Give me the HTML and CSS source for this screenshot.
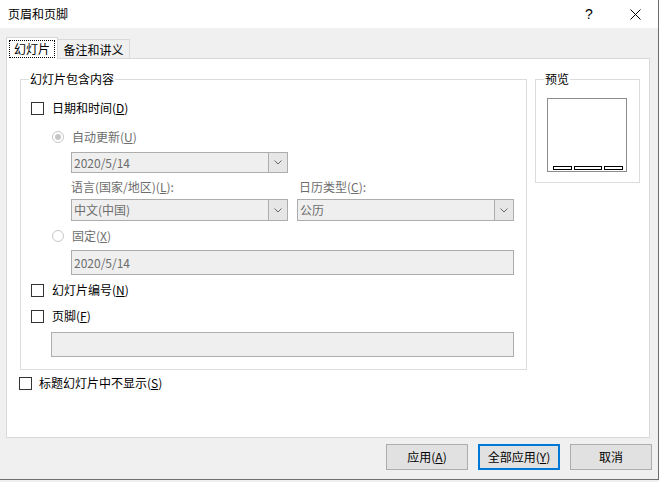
FILE: index.html
```html
<!DOCTYPE html>
<html lang="zh-CN">
<head>
<meta charset="utf-8">
<title>页眉和页脚</title>
<link rel="stylesheet" href="styles.css">
</head>
<body>
<div class="window">
  <div class="titlebar">
    <span class="title">页眉和页脚</span>
    <span class="tb-btn help">?</span>
    <span class="tb-btn close">
      <svg width="11" height="11" viewBox="0 0 11 11"><path d="M0.5 0.5 L10.5 10.5 M10.5 0.5 L0.5 10.5" stroke="#000" stroke-width="1" fill="none"/></svg>
    </span>
  </div>
  <div class="content">
    <div class="tabs">
      <div class="tab active"><span class="focus">幻灯片</span></div>
      <div class="tab">备注和讲义</div>
    </div>
    <div class="panel">
      <div class="panel-top">
        <div class="group main-group">
          <span class="legend">幻灯片包含内容</span>
          <div class="row check-row r-date">
            <span class="checkbox"></span><span class="label">日期和时间(<u>D</u>)</span>
          </div>
          <div class="row radio-row r-auto">
            <span class="radio checked"></span><span class="label disabled">自动更新(<u>U</u>)</span>
          </div>
          <div class="combo combo-date">
            <span class="combo-text">2020/5/14</span>
            <span class="combo-btn"><svg width="8" height="5" viewBox="0 0 8 5"><path d="M0.5 0.5 L4 4 L7.5 0.5" stroke="#666" stroke-width="1" fill="none"/></svg></span>
          </div>
          <div class="two-col labels">
            <span class="label disabled col">语言(国家/地区)(<u>L</u>):</span>
            <span class="label disabled col col-right">日历类型(<u>C</u>):</span>
          </div>
          <div class="two-col combos">
            <div class="combo col">
              <span class="combo-text">中文(中国)</span>
              <span class="combo-btn"><svg width="8" height="5" viewBox="0 0 8 5"><path d="M0.5 0.5 L4 4 L7.5 0.5" stroke="#666" stroke-width="1" fill="none"/></svg></span>
            </div>
            <div class="combo col">
              <span class="combo-text">公历</span>
              <span class="combo-btn"><svg width="8" height="5" viewBox="0 0 8 5"><path d="M0.5 0.5 L4 4 L7.5 0.5" stroke="#666" stroke-width="1" fill="none"/></svg></span>
            </div>
          </div>
          <div class="row radio-row r-fixed">
            <span class="radio"></span><span class="label disabled">固定(<u>X</u>)</span>
          </div>
          <div class="textbox tb-fixed"><span class="combo-text">2020/5/14</span></div>
          <div class="row check-row r-num">
            <span class="checkbox"></span><span class="label">幻灯片编号(<u>N</u>)</span>
          </div>
          <div class="row check-row r-footer">
            <span class="checkbox"></span><span class="label">页脚(<u>F</u>)</span>
          </div>
          <div class="textbox tb-footer"></div>
        </div>
        <div class="group preview-group">
          <span class="legend">预览</span>
          <div class="slide">
            <span class="bar bar-side"></span>
            <span class="bar bar-mid"></span>
            <span class="bar bar-side"></span>
          </div>
        </div>
      </div>
      <div class="row check-row r-title">
        <span class="checkbox"></span><span class="label">标题幻灯片中不显示(<u>S</u>)</span>
      </div>
    </div>
    <div class="buttons">
      <button class="btn">应用(<u>A</u>)</button>
      <button class="btn default">全部应用(<u>Y</u>)</button>
      <button class="btn">取消</button>
    </div>
  </div>
</div>
</body>
</html>
```

FILE: styles.css
```css
* {
  box-sizing: border-box;
}

html, body {
  margin: 0;
  padding: 0;
  background: #f0f0f0;
}

body {
  font-family: "Noto Sans CJK SC", "Microsoft YaHei", sans-serif;
  font-size: 12px;
  color: #000;
}

u {
  text-decoration: underline;
  text-underline-offset: 1px;
}

.window {
  width: 659px;
  height: 480px;
  background: #f0f0f0;
  border-right: 1px solid #6e6e6e;
  border-bottom: 1px solid #6e6e6e;
  display: flex;
  flex-direction: column;
}

.titlebar {
  height: 28px;
  background: #fff;
  display: flex;
  align-items: center;
  flex-shrink: 0;
}

.title {
  padding-left: 8px;
  line-height: 16px;
}

.tb-btn {
  width: 46px;
  height: 28px;
  display: flex;
  align-items: center;
  justify-content: center;
}

.help {
  margin-left: auto;
  font-family: "Liberation Sans", sans-serif;
  font-size: 14px;
}

.content {
  flex: 1;
  display: flex;
  flex-direction: column;
}

.tabs {
  display: flex;
  align-items: flex-end;
  margin-top: 9px;
  padding-left: 6px;
  height: 21px;
}

.tab {
  height: 19px;
  width: 72px;
  border: 1px solid #d9d9d9;
  border-left: none;
  border-bottom: none;
  background: #f0f0f0;
  display: flex;
  align-items: center;
  justify-content: center;
  line-height: 16px;
  padding-top: 1px;
}

.tab.active {
  height: 22px;
  width: 52px;
  border-left: 1px solid #d9d9d9;
  background: #fff;
  position: relative;
  z-index: 1;
  margin-bottom: -1px;
  padding-top: 0;
}

.focus {
  display: flex;
  align-items: center;
  justify-content: center;
  width: 46px;
  height: 18px;
  border: 1px dotted #000;
}

.panel {
  margin-left: 6px;
  width: 644px;
  height: 380px;
  background: #fff;
  border: 1px solid #d9d9d9;
}

.panel-top {
  display: flex;
  align-items: flex-start;
  padding-left: 13px;
  padding-top: 20px;
}

.group {
  position: relative;
  border: 1px solid #dcdcdc;
}

.legend {
  position: absolute;
  top: -8px;
  left: 8px;
  background: #fff;
  padding: 0 1px;
  line-height: 14px;
}

.main-group {
  width: 507px;
  height: 291px;
  padding-left: 10px;
  padding-top: 18px;
  display: flex;
  flex-direction: column;
  align-items: flex-start;
}

.preview-group {
  width: 105px;
  height: 104px;
  margin-left: 8px;
  padding-left: 11px;
  padding-top: 18px;
}

.slide {
  width: 80px;
  height: 74px;
  border: 1px solid #8c8c8c;
  display: flex;
  align-items: flex-end;
  gap: 2px;
  padding: 0 3px 1px 5px;
}

.bar {
  height: 4px;
  border: 1px solid #000;
  background: #fff;
}

.bar-side {
  width: 19px;
}

.bar-mid {
  width: 28px;
}

.row {
  display: flex;
  align-items: center;
  height: 20px;
}

.checkbox {
  width: 13px;
  height: 13px;
  border: 1px solid #333;
  background: #fff;
  flex-shrink: 0;
}

.check-row .label {
  margin-left: 8px;
}

.radio {
  width: 12px;
  height: 12px;
  border-radius: 50%;
  border: 1px solid #c6c6c6;
  background: #fff;
  display: flex;
  align-items: center;
  justify-content: center;
  flex-shrink: 0;
}

.radio.checked::after {
  content: "";
  width: 6px;
  height: 6px;
  border-radius: 50%;
  background: #c6c6c6;
}

.radio-row {
  margin-left: 21px;
}

.radio-row .label {
  margin-left: 8px;
}

.label {
  line-height: 16px;
  white-space: nowrap;
}

.label.disabled {
  color: #6d6d6d;
}

.r-auto {
  margin-top: 9px;
}

.combo {
  display: flex;
  width: 217px;
  border: 1px solid #adadad;
  background: #efefef;
  color: #6d6d6d;
}

.combo-date {
  height: 21px;
  margin-top: 5px;
  margin-left: 40px;
}

.combo-text {
  flex: 1;
  padding-left: 2px;
  display: flex;
  align-items: center;
  line-height: 16px;
  color: #6d6d6d;
}

.combo-btn {
  width: 20px;
  border: 1px solid #adadad;
  background: #e6e6e6;
  display: flex;
  align-items: center;
  justify-content: center;
  margin: -1px -1px -1px 0;
}

.two-col {
  display: flex;
  gap: 9px;
  margin-left: 40px;
}

.two-col .col {
  width: 217px;
}

.labels {
  height: 20px;
  align-items: center;
  margin-top: 4px;
}

.col-right {
  padding-left: 2px;
}

.combos {
  height: 22px;
  margin-top: 2px;
}

.combos .combo {
  height: 22px;
}

.r-fixed {
  margin-top: 5px;
}

.textbox {
  height: 25px;
  border: 1px solid #adadad;
  background: #efefef;
  display: flex;
}

.tb-fixed {
  width: 443px;
  margin-left: 40px;
  margin-top: 4px;
}

.r-num {
  margin-top: 5px;
}

.r-footer {
  margin-top: 6px;
}

.tb-footer {
  width: 463px;
  margin-left: 20px;
  margin-top: 6px;
}

.r-title {
  margin-top: 3px;
  margin-left: 12px;
}

.r-title .label {
  margin-left: 7px;
}

.buttons {
  display: flex;
  justify-content: flex-end;
  gap: 10px;
  padding-right: 6px;
  margin-top: 6px;
}

.btn {
  width: 82px;
  height: 26px;
  border: 1px solid #adadad;
  background: #e1e1e1;
  font-family: "Noto Sans CJK SC", "Microsoft YaHei", sans-serif;
  font-size: 12px;
  color: #000;
  padding: 0;
  line-height: 16px;
}

.btn.default {
  border: 2px solid #0078d7;
}
```
